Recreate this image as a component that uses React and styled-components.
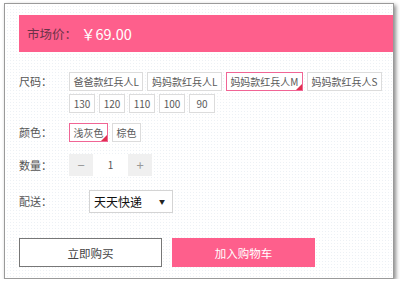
import React from 'react';
import styled, { createGlobalStyle } from 'styled-components';

const Global = createGlobalStyle`
  html, body {
    margin: 0;
    padding: 0;
    background: #fff;
    font-family: "Noto Sans CJK SC", "Noto Sans", "Liberation Sans", sans-serif;
  }
`;

const pink = '#fe5f8c';

const Frame = styled.div`
  box-sizing: border-box;
  width: 390px;
  height: 276px;
  margin: 3px 0 0 4px;
  border: 1px solid #9a9a9a;
  box-shadow: 2px 2px 4px rgba(0, 0, 0, 0.45);
  overflow: hidden;
  padding: 11px 0 0 14px;
  display: flex;
  flex-direction: column;
  background:
    linear-gradient(90deg, #fff 2px, transparent 2px) 0 0 / 3px 3px,
    linear-gradient(#fff 2px, #edf1f5 2px) 0 0 / 3px 3px;
`;

const PriceBar = styled.div`
  height: 37px;
  margin-right: -4px;
  background: ${pink};
  display: flex;
  align-items: center;
  padding-left: 8px;
`;

const PriceLabel = styled.span`
  font-size: 12.5px;
  color: #6a3247;
  width: 54px;
`;

const PriceValue = styled.span`
  font-size: 14.5px;
  color: #fff;
`;

const Row = styled.div`
  display: flex;
  align-items: flex-start;
  margin-top: ${p => p.$top}px;
`;

const Label = styled.div`
  width: ${p => (p.$wide ? 70 : 50)}px;
  flex-shrink: 0;
  font-size: 11px;
  color: #555;
  line-height: ${p => p.$lh}px;
`;

const Options = styled.div`
  display: flex;
  flex-wrap: wrap;
  width: 320px;
`;

const Option = styled.div`
  position: relative;
  box-sizing: border-box;
  min-width: 26px;
  height: 19px;
  line-height: 17px;
  padding: 0 3.5px;
  margin: 0 4px 3px 0;
  border: 1px solid ${p => (p.$active ? '#f06595' : '#dcdcdc')};
  background: #fff;
  font-size: 10px;
  color: #5a5a5a;
  text-align: center;
  white-space: nowrap;
  ${p =>
    p.$active &&
    `
    &::after {
      content: '';
      position: absolute;
      right: 0;
      bottom: 0;
      width: 0;
      height: 0;
      border-style: solid;
      border-width: 0 0 6px 6px;
      border-color: transparent transparent #e02f4f transparent;
    }
  `}
`;

const Stepper = styled.div`
  display: flex;
  height: 22px;
`;

const StepBtn = styled.div`
  width: 24px;
  background: #f0f0f0;
  color: #999;
  font-size: 13px;
  line-height: 22px;
  text-align: center;
`;

const StepValue = styled.div`
  width: 35px;
  background: #fff;
  color: #555;
  font-size: 10px;
  line-height: 22px;
  text-align: center;
`;

const Select = styled.div`
  box-sizing: border-box;
  width: 84px;
  height: 23px;
  border: 1px solid #d4d4d4;
  background: #fff;
  display: flex;
  align-items: center;
  justify-content: space-between;
  padding: 0 7px 0 4px;
  font-size: 12px;
  color: #111;
`;

const Arrow = styled.span`
  font-size: 6px;
  color: #222;
`;

const Actions = styled.div`
  display: flex;
  gap: 10px;
  margin-top: 25px;
`;

const Button = styled.div`
  box-sizing: border-box;
  width: 143px;
  height: 29px;
  display: flex;
  align-items: center;
  justify-content: center;
  font-size: 11.5px;
  border: 1px solid ${p => (p.$primary ? pink : '#777')};
  background: ${p => (p.$primary ? pink : '#fff')};
  color: ${p => (p.$primary ? '#fff' : '#444')};
`;

const sizes = ['爸爸款红兵人L', '妈妈款红兵人L', '妈妈款红兵人M', '妈妈款红兵人S', '130', '120', '110', '100', '90'];
const colors = ['浅灰色', '棕色'];

export default function App() {
  return (
    <>
      <Global />
      <Frame>
        <PriceBar>
          <PriceLabel>市场价：</PriceLabel>
          <PriceValue>￥69.00</PriceValue>
        </PriceBar>

        <Row $top={20}>
          <Label $lh={19}>尺码：</Label>
          <Options>
            {sizes.map(s => (
              <Option key={s} $active={s === '妈妈款红兵人M'}>{s}</Option>
            ))}
          </Options>
        </Row>

        <Row $top={7}>
          <Label $lh={19}>颜色：</Label>
          <Options>
            {colors.map(c => (
              <Option key={c} $active={c === '浅灰色'}>{c}</Option>
            ))}
          </Options>
        </Row>

        <Row $top={9}>
          <Label $lh={22}>数量：</Label>
          <Stepper>
            <StepBtn>−</StepBtn>
            <StepValue>1</StepValue>
            <StepBtn>+</StepBtn>
          </Stepper>
        </Row>

        <Row $top={14}>
          <Label $lh={22} $wide>配送：</Label>
          <Select>
            <span>天天快递</span>
            <Arrow>▼</Arrow>
          </Select>
        </Row>

        <Actions>
          <Button>立即购买</Button>
          <Button $primary>加入购物车</Button>
        </Actions>
      </Frame>
    </>
  );
}
